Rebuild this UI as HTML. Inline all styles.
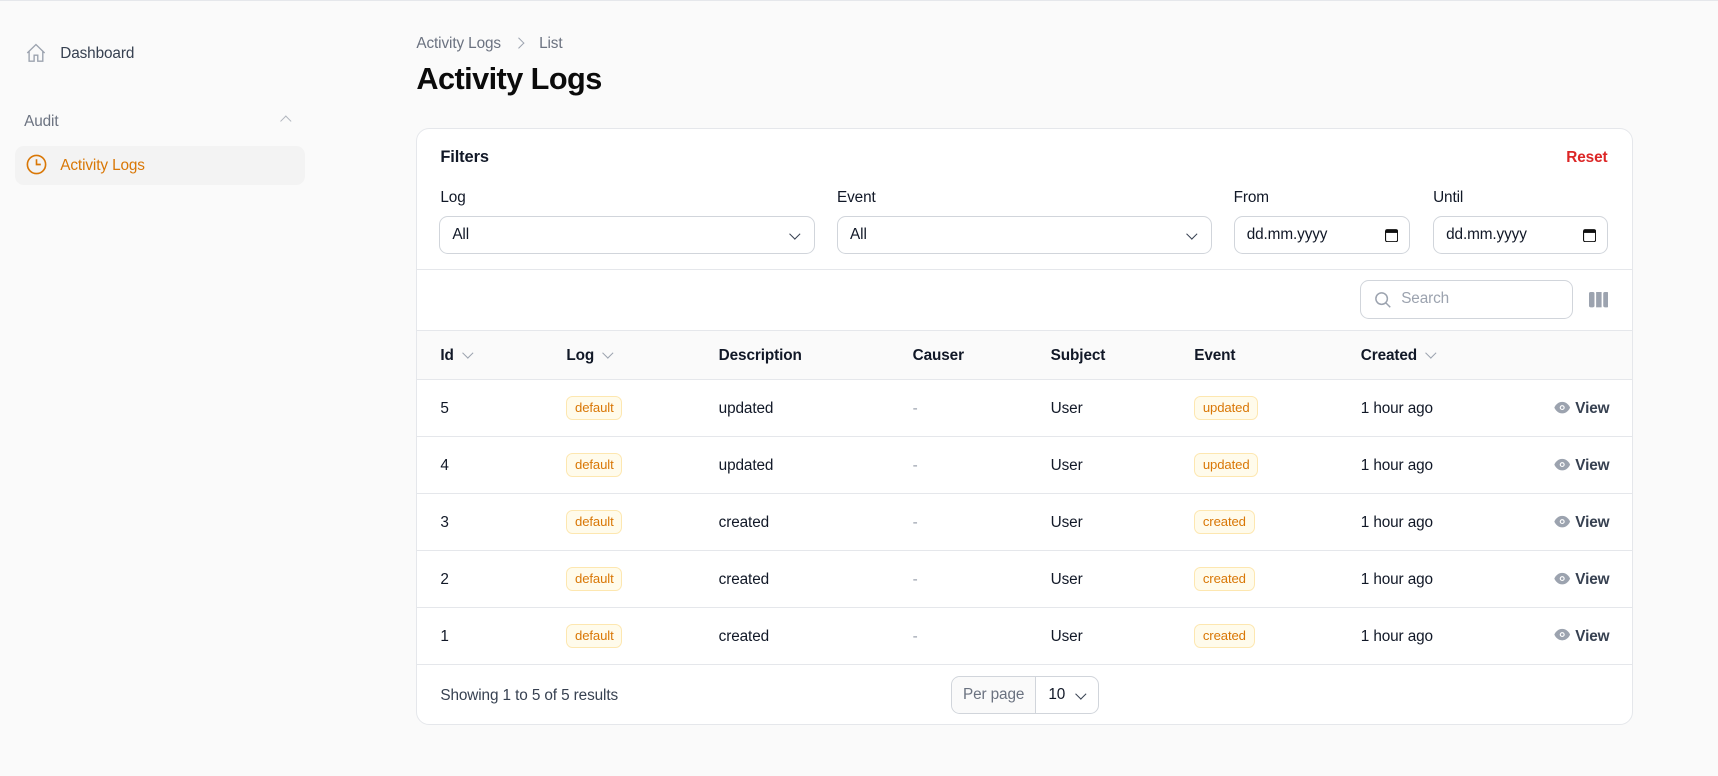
<!DOCTYPE html>
<html><head><meta charset="utf-8"><style>
html{zoom:1.0957}
*{box-sizing:border-box;margin:0;padding:0}
body{width:1568px;height:708px;background:#fafafa;font-family:"Liberation Sans",sans-serif;color:#111827;position:relative;overflow:hidden;border-top:1px solid #e5e7eb;letter-spacing:-0.1px}
.a{position:absolute;white-space:nowrap}
.t{font-size:14px;line-height:16px}
.card{position:absolute;left:380px;top:116px;width:1110px;height:545px;background:#fff;border:1px solid #e5e7eb;border-radius:12px;overflow:hidden}
.inp{position:absolute;height:35px;border:1px solid #d1d5db;border-radius:8px;background:#fff;font-size:14px;padding:0 11px;line-height:33px}
.row{position:absolute;left:0;width:1110px;height:52px;border-top:1px solid #e5e7eb}
.row span{position:absolute;top:18px;font-size:14px;line-height:16px}
.badge{position:absolute;top:15px!important;height:22px;border:1px solid #fde7b0;background:#fffbeb;color:#d97706;border-radius:6px;font-size:12px!important;line-height:20px!important;padding:0 7px}
.hd span{position:absolute;top:15px;font-size:14px;font-weight:bold;line-height:16px}
.ch{display:inline-block;width:7px;height:7px;border-right:1.3px solid #9ca3af;border-bottom:1.3px solid #9ca3af;transform:rotate(45deg);margin-left:9px;position:relative;top:-3px}
</style></head><body>
<svg class="a" style="left:23px;top:37px" width="20" height="20" viewBox="0 0 24 24" fill="none" stroke="#9ca3af" stroke-width="1.5"><path d="M2.5 12 12 2.8 21.5 12M4.5 10v11h5.5v-6.5h4V21h5.5V10"/></svg>
<div class="a t" style="left:55px;top:40px;color:#374151">Dashboard</div>
<div class="a t" style="left:22px;top:102px;color:#6b7280">Audit</div>
<div class="a" style="left:257px;top:106px;width:7px;height:7px;border-left:1.2px solid #b0b5bd;border-top:1.2px solid #b0b5bd;transform:rotate(45deg)"></div>
<div class="a" style="left:14px;top:132px;width:264px;height:36px;background:#f3f3f3;border-radius:8px"></div>
<svg class="a" style="left:23px;top:139px" width="21" height="21" viewBox="0 0 24 24" fill="none" stroke="#d97706" stroke-width="1.7"><circle cx="12" cy="12" r="9.5"/><path d="M12 6.5V12h4.5"/></svg>
<div class="a t" style="left:55px;top:142px;color:#d97706">Activity Logs</div>
<div class="a t" style="left:380px;top:31px;color:#6b7280">Activity Logs</div>
<div class="a" style="left:470px;top:35px;width:7px;height:7px;border-right:1.3px solid #9ca3af;border-top:1.3px solid #9ca3af;transform:rotate(45deg)"></div>
<div class="a t" style="left:492px;top:31px;color:#6b7280">List</div>
<div class="a" style="left:380px;top:56px;font-size:28px;font-weight:bold;line-height:32px;letter-spacing:-0.5px;color:#0b0b0b">Activity Logs</div>
<div class="card">
<div class="a" style="left:21px;top:17px;font-size:15px;font-weight:bold">Filters</div>
<div class="a t" style="right:22px;top:18px;color:#dc2626;font-weight:bold">Reset</div>
<div class="a t" style="left:21px;top:55px">Log</div>
<div class="a t" style="left:383px;top:55px">Event</div>
<div class="a t" style="left:745px;top:55px">From</div>
<div class="a t" style="left:927px;top:55px">Until</div>
<div class="inp" style="left:20px;top:79px;width:343px">All<span class="ch" style="position:absolute;right:14px;top:12px;border-color:#374151"></span></div>
<div class="inp" style="left:383px;top:79px;width:342px">All<span class="ch" style="position:absolute;right:14px;top:12px;border-color:#374151"></span></div>
<div class="inp" style="left:745px;top:79px;width:161px">dd.mm.yyyy<svg style="position:absolute;right:10px;top:10px" width="12" height="13" viewBox="0 0 12 13"><rect x="0.5" y="1.5" width="11" height="11" rx="1.5" fill="none" stroke="#111" /><rect x="0.5" y="1.5" width="11" height="3" fill="#111"/></svg></div>
<div class="inp" style="left:927px;top:79px;width:160px">dd.mm.yyyy<svg style="position:absolute;right:10px;top:10px" width="12" height="13" viewBox="0 0 12 13"><rect x="0.5" y="1.5" width="11" height="11" rx="1.5" fill="none" stroke="#111" /><rect x="0.5" y="1.5" width="11" height="3" fill="#111"/></svg></div>
<div class="a" style="left:0;top:128px;width:1110px;border-top:1px solid #e5e7eb"></div>
<div class="inp" style="left:860px;top:138px;width:195px;color:#9ca3af;padding-left:37px">Search<svg style="position:absolute;left:11px;top:8px" width="18" height="18" viewBox="0 0 24 24" fill="none" stroke="#9ca3af" stroke-width="1.8"><circle cx="10.5" cy="10.5" r="7"/><path d="M15.5 15.5 21 21"/></svg></div>
<svg class="a" style="left:1069px;top:149px" width="18" height="14" viewBox="0 0 18 14"><rect x="0" y="0" width="5" height="14" rx="1.5" fill="#9ca3af"/><rect x="6.5" y="0" width="5" height="14" fill="#9ca3af"/><rect x="13" y="0" width="5" height="14" rx="1.5" fill="#9ca3af"/></svg>
<div class="row hd" style="top:183px;height:46px;background:#fafafa">
<span style="left:21px">Id<i class="ch"></i></span><span style="left:136px">Log<i class="ch"></i></span><span style="left:275px">Description</span><span style="left:452px">Causer</span><span style="left:578px">Subject</span><span style="left:709px">Event</span><span style="left:861px">Created<i class="ch"></i></span>
</div>
<div class="row" style="top:228px"><span style="left:21px">5</span><span class="badge" style="left:136px">default</span><span style="left:275px">updated</span><span style="left:452px;color:#9ca3af">-</span><span style="left:578px">User</span><span class="badge" style="left:709px">updated</span><span style="left:861px">1 hour ago</span><span style="right:22px;font-weight:bold;color:#374151"><svg width="15" height="12" viewBox="0 0 20 14" style="vertical-align:-1px;margin-right:4px"><path d="M10 0C5 0 1.5 4 0.5 7c1 3 4.5 7 9.5 7s8.5-4 9.5-7C18.5 4 15 0 10 0z" fill="#9ca3af"/><circle cx="10" cy="7" r="3" fill="#fff"/><circle cx="10" cy="7" r="1.6" fill="#9ca3af"/></svg>View</span></div>
<div class="row" style="top:280px"><span style="left:21px">4</span><span class="badge" style="left:136px">default</span><span style="left:275px">updated</span><span style="left:452px;color:#9ca3af">-</span><span style="left:578px">User</span><span class="badge" style="left:709px">updated</span><span style="left:861px">1 hour ago</span><span style="right:22px;font-weight:bold;color:#374151"><svg width="15" height="12" viewBox="0 0 20 14" style="vertical-align:-1px;margin-right:4px"><path d="M10 0C5 0 1.5 4 0.5 7c1 3 4.5 7 9.5 7s8.5-4 9.5-7C18.5 4 15 0 10 0z" fill="#9ca3af"/><circle cx="10" cy="7" r="3" fill="#fff"/><circle cx="10" cy="7" r="1.6" fill="#9ca3af"/></svg>View</span></div>
<div class="row" style="top:332px"><span style="left:21px">3</span><span class="badge" style="left:136px">default</span><span style="left:275px">created</span><span style="left:452px;color:#9ca3af">-</span><span style="left:578px">User</span><span class="badge" style="left:709px">created</span><span style="left:861px">1 hour ago</span><span style="right:22px;font-weight:bold;color:#374151"><svg width="15" height="12" viewBox="0 0 20 14" style="vertical-align:-1px;margin-right:4px"><path d="M10 0C5 0 1.5 4 0.5 7c1 3 4.5 7 9.5 7s8.5-4 9.5-7C18.5 4 15 0 10 0z" fill="#9ca3af"/><circle cx="10" cy="7" r="3" fill="#fff"/><circle cx="10" cy="7" r="1.6" fill="#9ca3af"/></svg>View</span></div>
<div class="row" style="top:384px"><span style="left:21px">2</span><span class="badge" style="left:136px">default</span><span style="left:275px">created</span><span style="left:452px;color:#9ca3af">-</span><span style="left:578px">User</span><span class="badge" style="left:709px">created</span><span style="left:861px">1 hour ago</span><span style="right:22px;font-weight:bold;color:#374151"><svg width="15" height="12" viewBox="0 0 20 14" style="vertical-align:-1px;margin-right:4px"><path d="M10 0C5 0 1.5 4 0.5 7c1 3 4.5 7 9.5 7s8.5-4 9.5-7C18.5 4 15 0 10 0z" fill="#9ca3af"/><circle cx="10" cy="7" r="3" fill="#fff"/><circle cx="10" cy="7" r="1.6" fill="#9ca3af"/></svg>View</span></div>
<div class="row" style="top:436px"><span style="left:21px">1</span><span class="badge" style="left:136px">default</span><span style="left:275px">created</span><span style="left:452px;color:#9ca3af">-</span><span style="left:578px">User</span><span class="badge" style="left:709px">created</span><span style="left:861px">1 hour ago</span><span style="right:22px;font-weight:bold;color:#374151"><svg width="15" height="12" viewBox="0 0 20 14" style="vertical-align:-1px;margin-right:4px"><path d="M10 0C5 0 1.5 4 0.5 7c1 3 4.5 7 9.5 7s8.5-4 9.5-7C18.5 4 15 0 10 0z" fill="#9ca3af"/><circle cx="10" cy="7" r="3" fill="#fff"/><circle cx="10" cy="7" r="1.6" fill="#9ca3af"/></svg>View</span></div>
<div class="a" style="left:0;top:488px;width:1110px;border-top:1px solid #e5e7eb"></div>
<div class="a t" style="left:21px;top:509px;color:#374151">Showing 1 to 5 of 5 results</div>
<div class="a" style="left:487px;top:499px;width:135px;height:35px;border:1px solid #d1d5db;border-radius:8px;font-size:14px;line-height:33px">
<span class="a" style="left:0;top:0;width:77px;height:33px;border-right:1px solid #d1d5db;background:#fafafa;color:#6b7280;text-align:center;border-radius:8px 0 0 8px">Per page</span>
<span class="a" style="left:88px;top:0">10</span><span class="ch" style="position:absolute;left:114px;top:12px;border-color:#374151;margin:0"></span>
</div>
</div>
</body></html>
